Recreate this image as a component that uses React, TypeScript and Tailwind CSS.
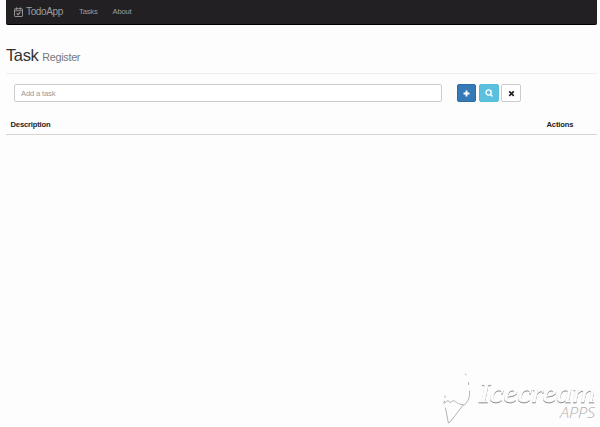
import type { ReactNode } from 'react';

function CalendarCheck() {
  return (
    <svg viewBox="0 0 18 20" className="h-[10px] w-[9px]" fill="none" stroke="currentColor" strokeWidth="1.8">
      <rect x="1" y="3.5" width="16" height="15.5" rx="1.2" />
      <path d="M1 7.5h16" />
      <path d="M5.2 1v4M12.8 1v4" strokeWidth="2.8" />
      <path d="M5.3 12.6l2.7 2.8 4.8-5" strokeWidth="2.2" />
    </svg>
  );
}

function IconButton({ label, tone, children }: { label: string; tone: string; children: ReactNode }) {
  return (
    <button aria-label={label} className={`flex h-[18px] items-center justify-center rounded-[2px] border ${tone}`}>
      {children}
    </button>
  );
}

function Watermark() {
  return (
    <div className="absolute left-[440px] top-[370px] h-[57px] w-[160px]">
      <svg viewBox="0 0 160 57" className="h-full w-full" fill="none">
        <g stroke="#b4b2b4" strokeWidth="1" strokeLinecap="round" strokeLinejoin="round">
          <path d="M5 26v1.500M4.500 31l-.8 2.200c2 .1 2.700-2.600 4.300-2.600 1.300.2.900 2.300 2.400 1.900 1.200-.5 1.700-2.100 3.300-1.700 2.900.7 4.200 4 9.200 3.700" />
          <path d="M5.500 38l2.900 15 1.600-.9 13.500-17.500" />
          <path d="M25.500 4l.5 1M28.400 12.500l.3 2M29.500 21v4.500c-.3 3.700-2.300 6.500-5.500 10" strokeDasharray="4 .8" />
        </g>
        <g fontStyle="italic">
          <text
            x="39"
            y="31.500"
            fontSize="27"
            fill="#fefdfe"
            fontFamily="'Liberation Serif', 'Times New Roman', serif"
            textLength="116"
            lengthAdjust="spacingAndGlyphs"
            stroke="#fefdfe"
            strokeWidth="0.5"
            className="[filter:drop-shadow(0.5px_1px_0.2px_#888)]"
          >
            Icecream
          </text>
          <text
            x="120"
            y="48"
            fontSize="15"
            fill="#b3b1b3"
            fontFamily="'Open Sans', sans-serif"
            fontWeight="300"
            textLength="35"
            lengthAdjust="spacingAndGlyphs"
          >
            APPS
          </text>
        </g>
      </svg>
    </div>
  );
}

export default function App() {
  return (
    <div className="relative h-[427px] w-[600px] overflow-hidden bg-[#fefdfe] pl-[6px] pr-[3px] font-['Liberation_Sans',Arial,sans-serif] text-[7.600px] tracking-[-0.160px] text-[#333]">
      <nav className="flex h-[25px] items-center rounded-b-[2px] border-b border-black bg-[#222023] pl-[8px] text-[#9d9d9d]">
        <a className="flex items-center gap-[3px] text-[10px] leading-none tracking-[-0.350px]">
          <CalendarCheck />
          <span className="w-[37px]">TodoApp</span>
        </a>
        <a className="ml-[16px] w-[18px]">Tasks</a>
        <a className="ml-[15.500px]">About</a>
      </nav>

      <header className="flex h-[49px] items-baseline gap-[4px] border-b border-[#eee] pt-[19.500px]">
        <h1 className="text-[16.500px] leading-[20px] tracking-[-0.400px]">Task</h1>
        <small className="text-[10.800px] leading-none tracking-[-0.300px] text-[#777]">Register</small>
      </header>

      <form className="mt-[10px] flex h-[18px] pl-[8px]">
        <input
          placeholder="Add a task"
          className="h-[18px] w-[428px] rounded-[2px] border border-[#ccc] bg-white px-[6px] text-[7.600px] tracking-[-0.160px] placeholder:text-[#999]"
        />
        <div className="ml-[15px] flex gap-[3px]">
          <IconButton label="Add" tone="w-[19px] border-[#2e6da4] bg-[#337ab7] text-white">
            <svg viewBox="0 0 8 8" className="h-[7px] w-[7px]" stroke="currentColor" strokeWidth="2.100">
              <path d="M4 .6v6.800M.6 4h6.800" />
            </svg>
          </IconButton>
          <IconButton label="Search" tone="w-[20px] border-[#53bfdc] bg-[#5bc0de] text-white">
            <svg viewBox="0 0 8 8" className="h-[8px] w-[8px]" fill="none" stroke="currentColor" strokeWidth="1.400" strokeLinecap="round">
              <circle cx="3.600" cy="3.500" r="2.600" />
              <path d="M5.500 5.400L7.100 7" />
            </svg>
          </IconButton>
          <IconButton label="Clear" tone="ml-[-1px] w-[20px] border-[#ccc] bg-white text-[#222]">
            <svg viewBox="0 0 8 8" className="h-[7px] w-[7px]" stroke="currentColor" strokeWidth="1.900">
              <path d="M1.400 1.600l5.200 5.200M6.600 1.600L1.400 6.800" />
            </svg>
          </IconButton>
        </div>
      </form>

      <table className="mt-[14px] w-full table-fixed border-collapse text-left">
        <thead>
          <tr className="h-[18px] border-b border-[#d5d5d5]">
            <th className="pb-px pl-[4.500px] font-bold text-[#222]">Description</th>
            <th className="w-[55px] pb-px pl-[4.500px] font-bold text-[#222]">Actions</th>
          </tr>
        </thead>
      </table>
      <Watermark />
    </div>
  );
}
